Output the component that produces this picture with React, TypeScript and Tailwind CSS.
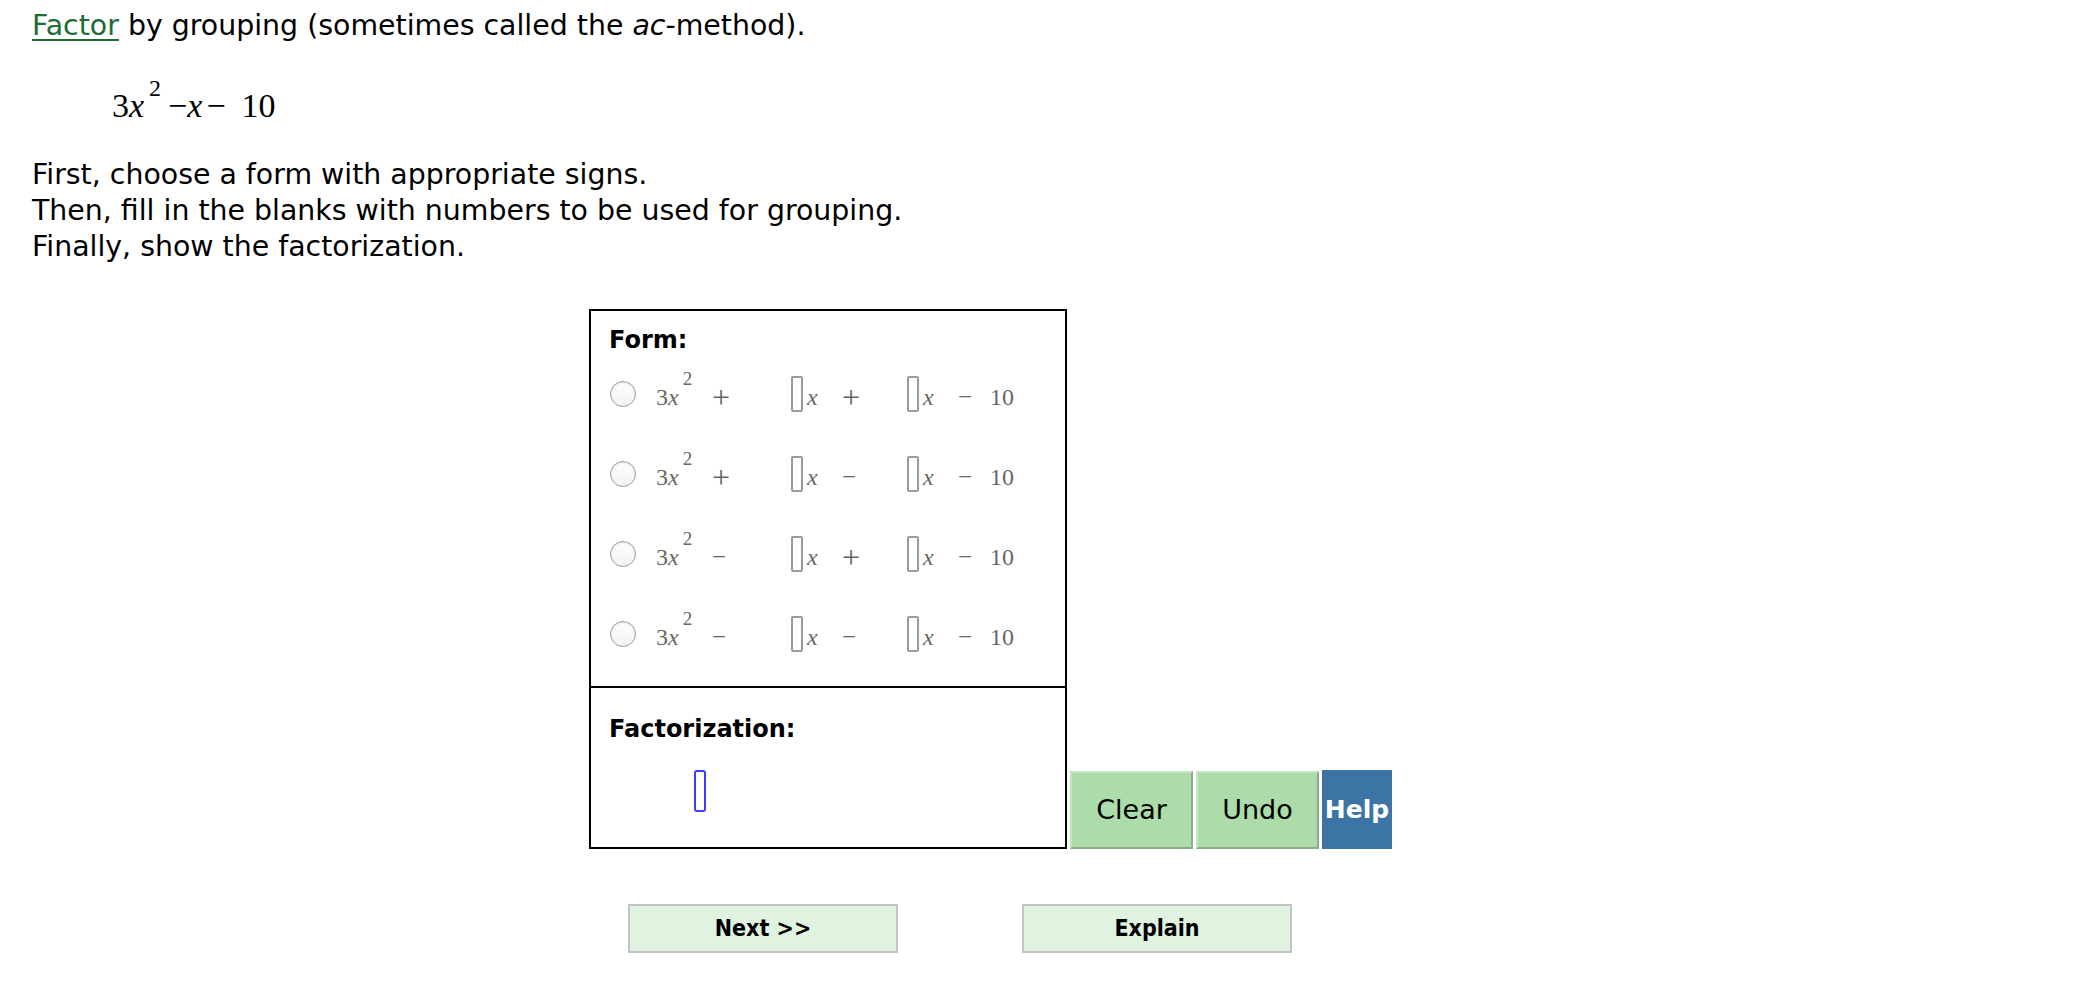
import React from 'react';

type Sign = '+' | '−';

const Op = ({ sign, className = '' }: { sign: Sign; className?: string }) => (
  <span
    className={
      'mt-[6px] h-[28px] leading-[28px] ' +
      (sign === '+' ? 'text-[32px] ' : 'text-[25px] ') +
      className
    }
  >
    {sign}
  </span>
);

const Blank = () => (
  <span className="h-[36px] w-[12px] rounded-[2px] border-2 border-[#9a9a9a] bg-white" />
);

const Radio = () => (
  <span className="h-[26px] w-[26px] rounded-full border border-[#a0a0a0] bg-gradient-to-b from-white to-[#f1f1f1] shadow-[inset_0_1px_2px_rgba(0,0,0,0.12)]" />
);

function FormRow({ first, second }: { first: Sign; second: Sign }) {
  return (
    <div className="flex h-[80px] items-center pl-[19px] font-['Liberation_Serif',serif] text-[24px] text-[#666]">
      <Radio />
      {/* 3x^2 */}
      <span className="ml-[20px] mt-[6px] flex h-[28px] w-[56px] items-start leading-[28px]">
        <span>3</span>
        <span className="italic">x</span>
        <span className="relative -top-[18px] ml-[4px] text-[19px] leading-[28px]">2</span>
      </span>
      <Op sign={first} className="w-[79px]" />
      <Blank />
      <span className="ml-[4px] mt-[6px] h-[28px] w-[35px] italic leading-[28px]">x</span>
      <Op sign={second} className="w-[65px]" />
      <Blank />
      <span className="ml-[4px] mt-[6px] h-[28px] w-[35px] italic leading-[28px]">x</span>
      <Op sign="−" className="w-[32px]" />
      <span className="mt-[6px] h-[28px] leading-[28px]">10</span>
    </div>
  );
}

export default function App() {
  return (
    <div className="min-h-[996px] bg-white font-['DejaVu_Sans',Verdana,sans-serif] text-black">
      {/* ---------- PROBLEM TEXT ---------- */}
      <div className="pl-[32px] pt-[8px]">
        <p className="text-[28.4px] leading-[36px]">
          <span className="text-[#1d6b35] underline decoration-[2px] underline-offset-[4px]">Factor</span> by
          grouping (sometimes called the <i>ac</i>-method).
        </p>

        <div className="mt-[42px] h-[40px] pl-[80px] font-['Liberation_Serif',serif] text-[34px] leading-[40px]">
          <span>3</span>
          <span className="italic">x</span>
          <span className="relative -top-[21px] ml-[5px] text-[24px]">2</span>
          <span className="ml-[7px]">−</span>
          <span className="italic">x</span>
          <span className="ml-[4px]">−</span>
          <span className="ml-[16px]">10</span>
        </div>

        <div className="mt-[31px] text-[28.4px] leading-[36px]">
          <p>First, choose a form with appropriate signs.</p>
          <p>Then, fill in the blanks with numbers to be used for grouping.</p>
          <p>Finally, show the factorization.</p>
        </div>
      </div>

      {/* ---------- ANSWER BOX + TOOLS ---------- */}
      <div className="mt-[44px] flex items-end pl-[589px]">
        <div className="w-[478px] border-2 border-black">
          <div className="h-[375px] pt-[15px]">
            <div className="pl-[18px] text-[24px] font-bold leading-[28px]">Form:</div>
            <FormRow first="+" second="+" />
            <FormRow first="+" second="−" />
            <FormRow first="−" second="+" />
            <FormRow first="−" second="−" />
          </div>
          <div className="h-[161px] border-t-2 border-black pl-[18px] pt-[27px]">
            <div className="text-[24px] font-bold leading-[28px]">Factorization:</div>
            <div className="ml-[85px] mt-[27px] h-[42px] w-[12px] rounded-[3px] border-2 border-[#3d3dff]" />
          </div>
        </div>

        <button className="ml-[3px] flex h-[78px] w-[123px] items-center justify-center border-2 border-t-[#c3e6c1] border-l-[#c3e6c1] border-b-[#8dab8b] border-r-[#8dab8b] bg-[#acdcaa] text-[27px]">
          Clear
        </button>
        <button className="ml-[3px] flex h-[78px] w-[123px] items-center justify-center border-2 border-t-[#c3e6c1] border-l-[#c3e6c1] border-b-[#8dab8b] border-r-[#8dab8b] bg-[#acdcaa] text-[27px]">
          Undo
        </button>
        <button className="ml-[3px] flex h-[79px] w-[70px] items-center justify-center bg-[#3d74a6] text-[25px] font-bold text-white">
          Help
        </button>
      </div>

      {/* ---------- NAV BUTTONS ---------- */}
      <div className="mt-[55px] flex gap-[124px] pl-[628px] font-['DejaVu_Sans_Condensed','DejaVu_Sans',sans-serif]">
        <button className="h-[49px] w-[270px] border-2 border-[#c4c4c4] bg-[#dff3e0] text-[23px] font-bold">
          Next &gt;&gt;
        </button>
        <button className="h-[49px] w-[270px] border-2 border-[#c4c4c4] bg-[#dff3e0] text-[23px] font-bold">
          Explain
        </button>
      </div>
    </div>
  );
}
